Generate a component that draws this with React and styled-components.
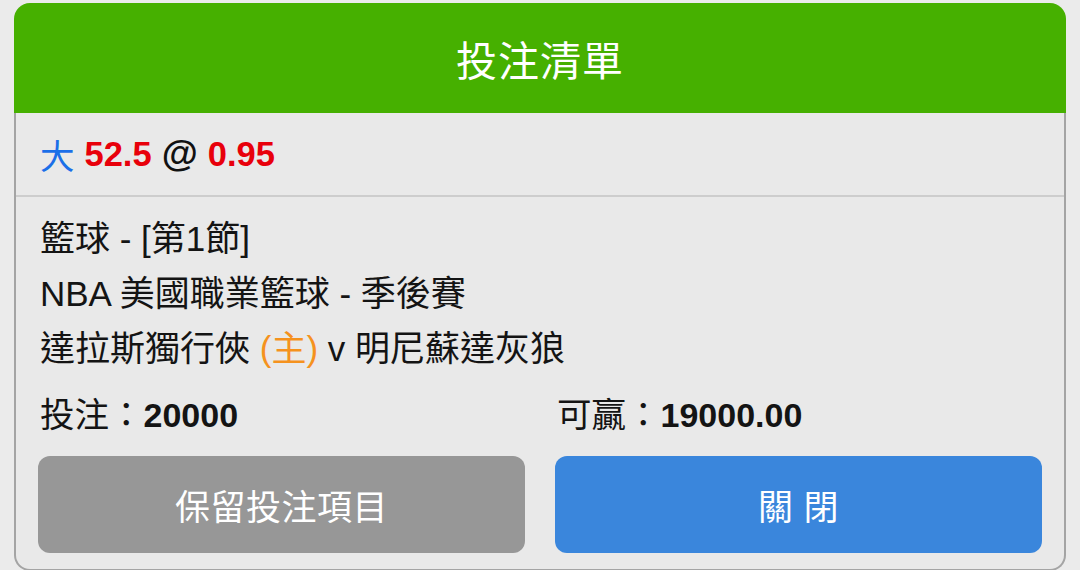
import React from "react";
import styled, { createGlobalStyle } from "styled-components";

const Global = createGlobalStyle`
  html, body { margin: 0; padding: 0; background: #ebebeb; }
  body {
    font-family: "Liberation Sans", "Noto Sans CJK TC", sans-serif;
    color: #141414;
    overflow: hidden;
  }
`;

const Page = styled.div`
  padding: 3px 14px 0 14px;
  width: 1080px;
  box-sizing: border-box;
`;

const Card = styled.div`
  display: flex;
  flex-direction: column;
`;

const Header = styled.div`
  height: 110px;
  background: #46b000;
  border-radius: 16px 16px 0 0;
  display: flex;
  align-items: center;
  justify-content: center;
  color: #ffffff;
  font-family: "Noto Sans CJK TC", sans-serif;
  font-size: 41px;
  letter-spacing: 1px;
`;

const Body = styled.div`
  background: #e9e9e9;
  border: 2px solid #a4a4a4;
  border-top: none;
  border-radius: 0 0 16px 16px;
  padding-bottom: 16px;
`;

const OddsRow = styled.div`
  height: 82px;
  display: flex;
  align-items: center;
  padding: 0 24px;
  border-bottom: 2px solid #cdcdcd;
  font-size: 34.5px;
  font-weight: bold;
  gap: 10px;
`;

const Tag = styled.span`
  color: ${(p) => p.$color};
  font-weight: ${(p) => (p.$light ? "normal" : "bold")};
  font-size: ${(p) => (p.$big ? "37px" : "inherit")};
  font-family: ${(p) => (p.$cjk ? '"Noto Sans CJK TC", sans-serif' : "inherit")};
`;

const Info = styled.div`
  padding: 14px 24px 0 24px;
  font-size: 35px;
  line-height: 55px;
`;

const Line = styled.div`
  white-space: nowrap;
`;

const Home = styled.span`
  color: #f5921e;
`;

const Grid = styled.div`
  display: grid;
  grid-template-columns: 1fr 1fr;
  column-gap: 30px;
  padding: 0 22px;
`;

const Stat = styled.div`
  font-size: 34.5px;
  line-height: 55px;
  padding-left: 2px;
  margin-top: 12px;
  white-space: nowrap;
  b { font-weight: bold; font-size: 34px; }
`;

const Button = styled.button`
  margin-top: 13px;
  height: 97px;
  border: none;
  border-radius: 12px;
  background: ${(p) => p.$bg};
  color: #ffffff;
  font-family: "Liberation Sans", "Noto Sans CJK TC", sans-serif;
  font-size: 35px;
  letter-spacing: 0.5px;
  display: flex;
  align-items: center;
  justify-content: center;
  padding: 0;
  cursor: pointer;
`;

export default function App() {
  return (
    <Page>
      <Global />
      <Card>
        <Header>投注清單</Header>
        <Body>
          <OddsRow>
            <Tag $color="#1b6fe8" $light $cjk>大</Tag>
            <Tag $color="#e8000b">52.5</Tag>
            <Tag $color="#111" $big>@</Tag>
            <Tag $color="#e8000b">0.95</Tag>
          </OddsRow>
          <Info>
            <Line>籃球 - [第1節]</Line>
            <Line>NBA 美國職業籃球 - 季後賽</Line>
            <Line>
              達拉斯獨行俠 <Home>(主)</Home> v 明尼蘇達灰狼
            </Line>
          </Info>
          <Grid>
            <Stat>
              投注：<b>20000</b>
            </Stat>
            <Stat>
              可贏：<b>19000.00</b>
            </Stat>
            <Button $bg="#979797">保留投注項目</Button>
            <Button $bg="#3a86dc">關 閉</Button>
          </Grid>
        </Body>
      </Card>
    </Page>
  );
}
